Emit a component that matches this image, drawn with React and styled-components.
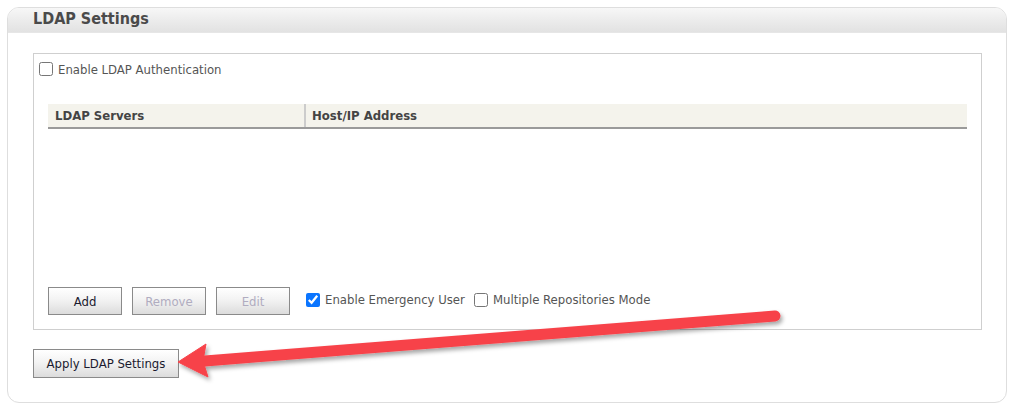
import React from 'react';
import styled, { createGlobalStyle } from 'styled-components';

const GlobalStyle = createGlobalStyle`
  html, body {
    margin: 0;
    padding: 0;
    background: #ffffff;
  }
  body {
    font-family: "DejaVu Sans Condensed", "DejaVu Sans", Tahoma, sans-serif;
    font-size: 13px;
    color: #444;
  }
`;

const Page = styled.div`
  position: relative;
  width: 1016px;
  height: 412px;
  padding: 7px;
  box-sizing: border-box;
`;

const Panel = styled.section`
  width: 1000px;
  height: 396px;
  box-sizing: border-box;
  border: 1px solid #dedede;
  border-radius: 12px;
  background: #fff;
  overflow: hidden;
`;

const PanelHeader = styled.h2`
  margin: 0;
  height: 24px;
  line-height: 22px;
  padding-left: 25px;
  font-size: 16px;
  font-weight: bold;
  color: #4a4a4a;
  background: linear-gradient(to bottom, #f7f7f7 0%, #ececec 50%, #e2e2e2 100%);
  border-bottom: 1px solid #e6e6e6;
`;

const PanelBody = styled.div`
  padding: 20px 25px 0 25px;
`;

const Fieldset = styled.div`
  width: 949px;
  height: 277px;
  box-sizing: border-box;
  border: 1px solid #cfcfcf;
  display: flex;
  flex-direction: column;
  padding: 7px 14px 14px 5px;
`;

const CheckRow = styled.label`
  display: flex;
  align-items: center;
  gap: 5px;
  height: 16px;
  color: #555;
`;

const Check = styled.input.attrs({ type: 'checkbox' })`
  width: 14px;
  height: 14px;
  margin: 0;
  accent-color: #0a75ff;
`;

const Table = styled.div`
  margin: 27px 0 0 9px;
  width: 919px;
  display: grid;
  grid-template-columns: 256px 1fr;
  background: #f4f3ec;
  border-bottom: 2px solid #9a9a9a;
  height: 25px;
  box-sizing: border-box;
`;

const HeadCell = styled.div`
  display: flex;
  align-items: center;
  font-weight: bold;
  font-size: 13px;
  color: #444;
  border-left: ${p => (p.divided ? '2px solid #cccccc' : 'none')};
  padding-left: ${p => (p.divided ? '6px' : '7px')};
`;

const Spacer = styled.div`
  flex: 1;
`;

const Toolbar = styled.div`
  display: flex;
  align-items: center;
  margin-left: 9px;
  gap: 10px;
`;

const Button = styled.button`
  width: ${p => p.w || 74}px;
  height: ${p => p.h || 28}px;
  box-sizing: border-box;
  border: 1px solid #8a8a8a;
  background: linear-gradient(to bottom, #ffffff 0%, #f3f3f3 45%, #dcdcdc 100%);
  font-family: "DejaVu Sans Condensed", "DejaVu Sans", Tahoma, sans-serif;
  font-size: 13px;
  color: ${p => (p.disabled ? '#b0acc0' : '#1a1a2e')};
  padding: 0;
  cursor: ${p => (p.disabled ? 'default' : 'pointer')};
`;

const Options = styled.div`
  display: flex;
  align-items: center;
  gap: 9px;
  margin-left: 6px;
  padding-bottom: 3px;
`;

const Footer = styled.div`
  padding-top: 19px;
`;

const Overlay = styled.svg`
  position: absolute;
  left: 0;
  top: 0;
  pointer-events: none;
`;

const Arrow = () => (
  <Overlay width="1016" height="412" viewBox="0 0 1016 412">
    <defs>
      <filter id="shadow" x="-10%" y="-50%" width="120%" height="200%">
        <feDropShadow dx="2" dy="3" stdDeviation="2" floodColor="#000" floodOpacity="0.35" />
      </filter>
    </defs>
    <g filter="url(#shadow)" fill="#f7434a" stroke="#f7434a">
      <line x1="775" y1="316" x2="205" y2="361" strokeWidth="11" strokeLinecap="round" />
      <polygon points="178,362 206,344 203,361 208,377" strokeWidth="1" strokeLinejoin="round" />
    </g>
  </Overlay>
);

export default function App() {
  return (
    <>
      <GlobalStyle />
      <Page>
        <Panel>
          <PanelHeader>LDAP Settings</PanelHeader>
          <PanelBody>
            <Fieldset>
              <CheckRow>
                <Check />
                Enable LDAP Authentication
              </CheckRow>
              <Table>
                <HeadCell>LDAP Servers</HeadCell>
                <HeadCell divided>Host/IP Address</HeadCell>
              </Table>
              <Spacer />
              <Toolbar>
                <Button>Add</Button>
                <Button disabled>Remove</Button>
                <Button disabled>Edit</Button>
                <Options>
                  <CheckRow>
                    <Check defaultChecked />
                    Enable Emergency User
                  </CheckRow>
                  <CheckRow>
                    <Check />
                    Multiple Repositories Mode
                  </CheckRow>
                </Options>
              </Toolbar>
            </Fieldset>
            <Footer>
              <Button w={146} h={29}>Apply LDAP Settings</Button>
            </Footer>
          </PanelBody>
        </Panel>
        <Arrow />
      </Page>
    </>
  );
}
